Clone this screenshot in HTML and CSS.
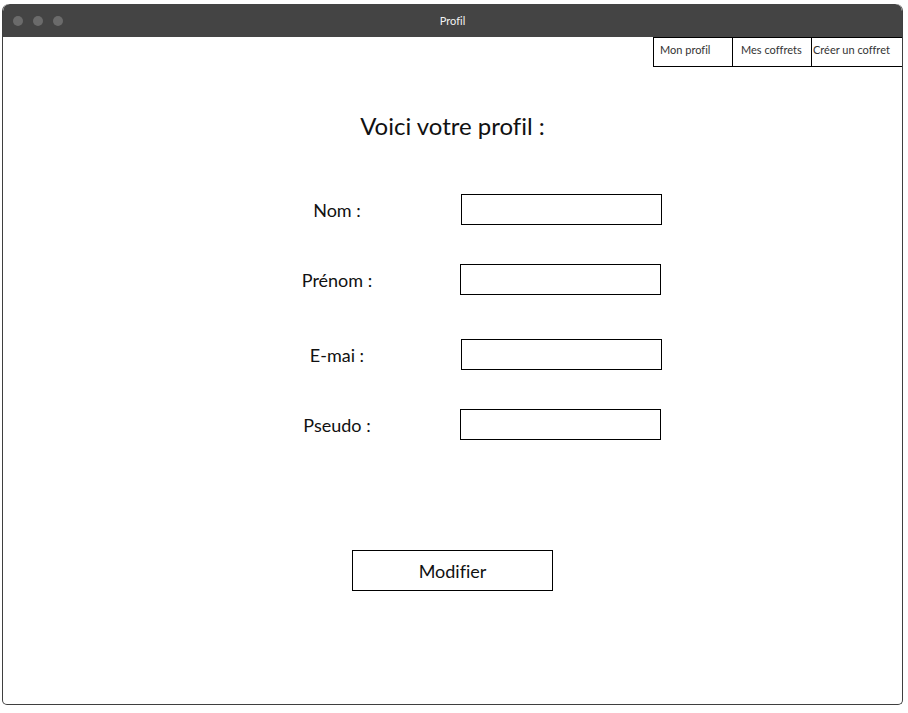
FILE: index.html
```html
<!DOCTYPE html>
<html lang="fr">
<head>
<meta charset="utf-8">
<title>Profil</title>
<link rel="stylesheet" href="styles.css">
</head>
<body>
<div class="window">
  <div class="titlebar">
    <div class="dots"><span class="dot"></span><span class="dot"></span><span class="dot"></span></div>
    <div class="title">Profil</div>
  </div>
  <div class="content">
    <nav class="nav">
      <a class="nav-item">Mon profil</a>
      <a class="nav-item">Mes coffrets</a>
      <a class="nav-item nav-wide">Créer un coffret</a>
    </nav>
    <h1 class="heading">Voici votre profil :</h1>
    <form class="form">
      <div class="row row-nom"><label class="label">Nom :</label><input class="field" type="text"></div>
      <div class="row row-prenom"><label class="label">Prénom :</label><input class="field shift" type="text"></div>
      <div class="row row-email"><label class="label">E-mai :</label><input class="field" type="text"></div>
      <div class="row row-pseudo"><label class="label">Pseudo :</label><input class="field shift" type="text"></div>
      <div class="actions"><button class="btn" type="button">Modifier</button></div>
    </form>
  </div>
</div>
</body>
</html>
```
FILE: styles.css
```css
* { box-sizing: border-box; }
html, body { margin: 0; padding: 0; background: #ffffff; }
body {
  font-family: "Source Sans Pro", Lato, "Noto Sans", sans-serif; color: #111;
  font-variant-ligatures: none;
}

.window {
  margin: 4px 0 0 2px;
  width: 901px;
  height: 701px;
  border: 1px solid #3f3f3f;
  border-top: none;
  border-radius: 7px 7px 5px 5px;
  overflow: hidden;
  background: #fff;
}
.titlebar {
  height: 33px;
  background: #444444;
  display: flex;
  align-items: center;
  position: relative;
  border-radius: 7px 7px 0 0;
}
.dots { display: flex; gap: 10px; padding-left: 10px; }
.dot { width: 10px; height: 10px; border-radius: 50%; background: #6b6b6b; }
.title {
  position: absolute; left: 0; right: 0; text-align: center;
  color: #f2f2f2; font-size: 11px; top: 10px; line-height: 14px;
}
.content { display: flex; flex-direction: column; }
.nav { display: flex; justify-content: flex-end; height: 30px; margin-right: -1px; }
.nav-item {
  width: 80px; height: 30px; border: 1px solid #000; margin-left: -1px;
  font-size: 11px; color: #333; line-height: 24px; padding-left: 6px; white-space: nowrap;
}
.nav-item:nth-child(2) { padding-left: 8px; }
.nav-wide { width: 92px; padding-left: 1px; }

.heading {
  margin: 44px 0 0; font-weight: 400; font-size: 24px; line-height: 30px;
  text-align: center; color: #111;
}
.form { display: flex; flex-direction: column; margin-top: 53px; }
.row {
  display: grid; grid-template-columns: 160px 201px; column-gap: 44px;
  margin-left: 254px; align-items: center; height: 31px;
}
.row-prenom { margin-top: 39px; }
.row-email { margin-top: 44px; }
.row-pseudo { margin-top: 39px; }
.label { text-align: center; font-size: 18px; color: #111; }
.field {
  width: 201px; height: 31px; border: 1px solid #000; margin: 0; padding: 0;
  background: #fff; border-radius: 0;
}
.shift { margin-left: -1px; }
.actions { display: flex; justify-content: center; margin-top: 110px; }
.btn {
  width: 201px; height: 41px; border: 1px solid #000; background: #fff;
  font-family: inherit; font-variant-ligatures: none; font-size: 18px; color: #111;
  border-radius: 0; padding: 0;
}
```
